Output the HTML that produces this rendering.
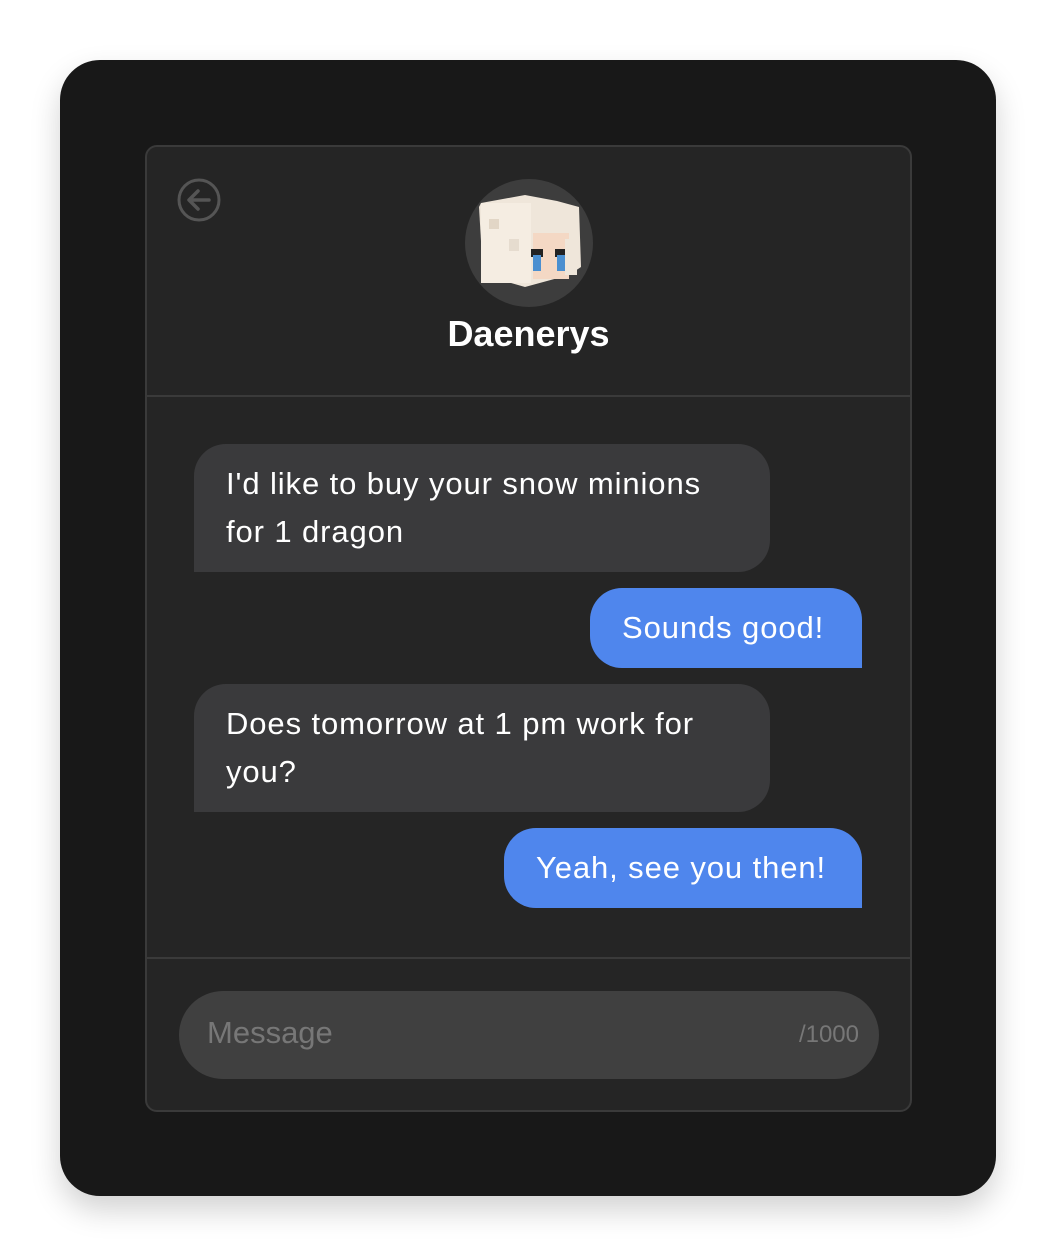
<!DOCTYPE html>
<html><head><meta charset="utf-8"><style>
*{margin:0;padding:0;box-sizing:border-box}
body{width:1056px;height:1256px;background:#fff;font-family:"Liberation Sans",sans-serif;position:relative;overflow:hidden}
.outer{position:absolute;left:60px;top:60px;width:936px;height:1136px;background:#181818;border-radius:40px;box-shadow:0 14px 30px rgba(0,0,0,.18)}
.panel{position:absolute;left:145px;top:145px;width:767px;height:967px;background:#252525;border:2px solid #3a3a3a;border-radius:12px;overflow:hidden}
.hdiv{position:absolute;left:0;right:0;height:2px;background:#3a3a3a}
.av{position:absolute;left:318px;top:32px;width:128px;height:128px;border-radius:50%;background:#3d3d3d;overflow:hidden}
.name{position:absolute;left:0;right:0;top:166px;text-align:center;color:#fff;font-weight:bold;font-size:36px}
.b{position:absolute;color:#fff;font-size:31px;line-height:48px;padding:0 32px;white-space:nowrap}
.g{background:#3a3a3c;border-radius:32px 32px 32px 0;letter-spacing:0.9px}
.bl{background:#4f86ed;border-radius:32px 32px 0 32px;letter-spacing:0.9px}
.inp{position:absolute;left:32px;top:844px;width:700px;height:88px;background:#404040;border-radius:44px}
.ph{position:absolute;left:28px;top:24px;font-size:31px;color:#777}
.cnt{position:absolute;right:20px;top:30px;font-size:24px;color:#777}
</style></head><body>
<div class="outer"></div>
<div class="panel">
<svg style="position:absolute;left:30px;top:31px" width="44" height="44" viewBox="0 0 44 44"><circle cx="22" cy="22" r="20" fill="none" stroke="#555" stroke-width="3"/><path d="M32 22H13M21 13l-9 9 9 9" fill="none" stroke="#555" stroke-width="3.5" stroke-linecap="round" stroke-linejoin="round"/></svg>
<div class="av"><svg width="128" height="128" viewBox="0 0 128 128">
<polygon points="16,24 60,16 92,22 114,28 116,88 104,96 60,108 18,96 14,28" fill="#efe6da"/>
<rect x="16" y="24" width="50" height="80" fill="#f5ede2"/>
<rect x="24" y="40" width="10" height="10" fill="#e2d6c6"/><rect x="44" y="60" width="10" height="12" fill="#e6dccf"/>
<rect x="68" y="54" width="36" height="46" fill="#f4d8c4"/>
<rect x="66" y="70" width="12" height="8" fill="#222"/><rect x="90" y="70" width="12" height="8" fill="#222"/>
<rect x="68" y="76" width="8" height="16" fill="#4a8fd0"/><rect x="92" y="76" width="8" height="16" fill="#4a8fd0"/>
<rect x="100" y="60" width="12" height="36" fill="#efe6da"/>
</svg></div>
<div class="name">Daenerys</div>
<div class="hdiv" style="top:248px"></div>
<div class="b g" style="left:47px;top:297px;width:576px;height:128px;padding-top:16px">I'd like to buy your snow minions<br>for 1 dragon</div>
<div class="b bl" style="left:443px;top:441px;width:272px;height:80px;padding-top:16px">Sounds good!</div>
<div class="b g" style="left:47px;top:537px;width:576px;height:128px;padding-top:16px">Does tomorrow at 1 pm work for<br>you?</div>
<div class="b bl" style="left:357px;top:681px;width:358px;height:80px;padding-top:16px">Yeah, see you then!</div>
<div class="hdiv" style="top:810px"></div>
<div class="inp"><span class="ph">Message</span><span class="cnt">/1000</span></div>
</div>
</body></html>
